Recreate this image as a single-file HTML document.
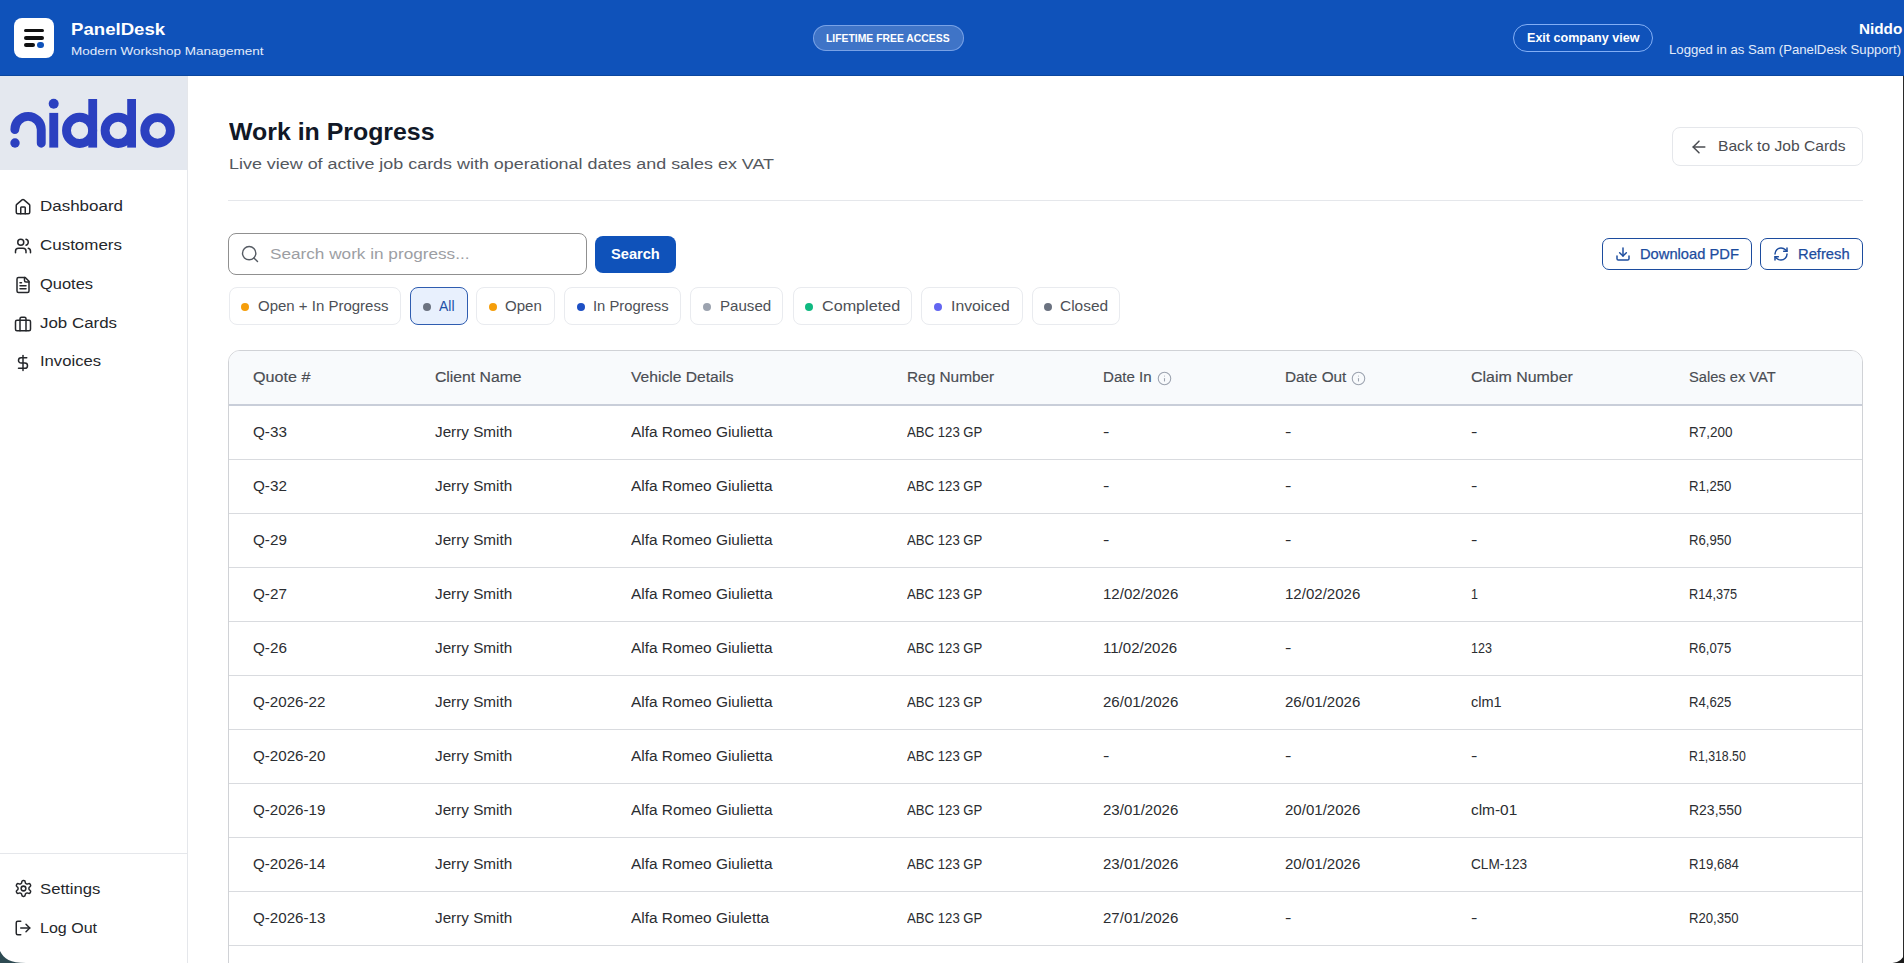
<!DOCTYPE html>
<html><head><meta charset="utf-8">
<style>
*{box-sizing:border-box;margin:0;padding:0}
html,body{width:1904px;height:963px;overflow:hidden;background:#fff;font-family:"Liberation Sans",sans-serif;color:#1f2937}
.t{position:absolute;white-space:nowrap;line-height:1;transform-origin:0 0}
.b{position:absolute}
.ic{position:absolute;overflow:visible}
</style></head>
<body>
<div class="b" style="left:0;top:0;width:1904px;height:76px;background:#0F52BA"></div>
<div class="b" style="left:0;top:75px;width:1904px;height:1px;background:#0B479F"></div>
<div class="b" style="left:14px;top:18px;width:40px;height:40px;background:#fff;border-radius:8px"></div>
<div class="b" style="left:24.2px;top:28.7px;width:19.7px;height:3.7px;background:#111;border-radius:2px"></div>
<div class="b" style="left:24.2px;top:36.2px;width:19.7px;height:3.7px;background:#111;border-radius:2px"></div>
<div class="b" style="left:24.2px;top:43.4px;width:10.5px;height:3.7px;background:#111;border-radius:2px"></div>
<div class="b" style="left:37.2px;top:41.9px;width:6.6px;height:6.6px;background:#0F52BA;border-radius:50%"></div>
<div class="t" style="left:70.70px;top:21px;font-size:17px;transform:scaleX(1.0947);font-weight:bold;color:#fff;">PanelDesk</div>
<div class="t" style="left:70.50px;top:46px;font-size:11.5px;transform:scaleX(1.1734);color:#E3ECFA;">Modern Workshop Management</div>
<div class="b" style="left:813px;top:25px;width:151px;height:26px;border-radius:13px;background:rgba(255,255,255,0.2);border:1px solid rgba(170,200,255,0.55)"></div>
<div class="t" style="left:826.40px;top:33px;font-size:11.5px;transform:scaleX(0.9025);font-weight:bold;color:#fff;">LIFETIME FREE ACCESS</div>
<div class="b" style="left:1513px;top:24px;width:140px;height:28px;border-radius:14px;border:1px solid rgba(150,190,255,0.85)"></div>
<div class="t" style="left:1527.00px;top:32px;font-size:12px;transform:scaleX(1.0470);font-weight:bold;color:#fff;">Exit company view</div>
<div class="t" style="left:1858.50px;top:21px;font-size:15.5px;transform:scaleX(0.9852);font-weight:bold;color:#fff;">Niddo</div>
<div class="t" style="left:1669.25px;top:43px;font-size:13px;transform:scaleX(1.0129);color:#E3ECFA;">Logged in as Sam (PanelDesk Support)</div>
<div class="b" style="left:187px;top:76px;width:1px;height:887px;background:#E5E7EB"></div>
<div class="b" style="left:0;top:76px;width:187px;height:94px;background:#E4E8EF"></div>
<svg class="ic" style="left:0;top:76px;width:187px;height:94px" viewBox="0 76 187 94">
<g fill="#2B40C0">
<circle cx="15" cy="143" r="4.7"/>
<circle cx="53.7" cy="103.8" r="5"/>
<rect x="49.3" y="112.9" width="8.9" height="34.7"/>
<rect x="88.3" y="99" width="8.8" height="48.6"/>
<rect x="127.2" y="99" width="8.8" height="48.6"/>
</g>
<g fill="none" stroke="#2B40C0" stroke-width="8.9">
<path d="M14.85 129.6 A13.2 13.2 0 0 1 41.25 129.6 V143.2" stroke-linecap="round"/>
<circle cx="79.6" cy="130.4" r="13.1"/>
<circle cx="118.2" cy="130.4" r="13.1"/>
<circle cx="157.6" cy="130.4" r="12.8"/>
</g>
</svg>
<svg class="ic" style="left:14px;top:198.0px;width:18px;height:18px" viewBox="0 0 24 24" fill="none" stroke="#25272B" stroke-width="2" stroke-linecap="round" stroke-linejoin="round"><path d="M15 21v-8a1 1 0 0 0-1-1h-4a1 1 0 0 0-1 1v8"/><path d="M3 10a2 2 0 0 1 .709-1.528l7-5.999a2 2 0 0 1 2.582 0l7 5.999A2 2 0 0 1 21 10v9a2 2 0 0 1-2 2H5a2 2 0 0 1-2-2z"/></svg>
<div class="t" style="left:40.30px;top:198px;font-size:15.5px;transform:scaleX(1.0943);color:#25272B;">Dashboard</div>
<svg class="ic" style="left:14px;top:236.8px;width:18px;height:18px" viewBox="0 0 24 24" fill="none" stroke="#25272B" stroke-width="2" stroke-linecap="round" stroke-linejoin="round"><path d="M16 21v-2a4 4 0 0 0-4-4H6a4 4 0 0 0-4 4v2"/><circle cx="9" cy="7" r="4"/><path d="M22 21v-2a4 4 0 0 0-3-3.87"/><path d="M16 3.13a4 4 0 0 1 0 7.75"/></svg>
<div class="t" style="left:40.30px;top:237px;font-size:15.5px;transform:scaleX(1.0941);color:#25272B;">Customers</div>
<svg class="ic" style="left:14px;top:275.7px;width:18px;height:18px" viewBox="0 0 24 24" fill="none" stroke="#25272B" stroke-width="2" stroke-linecap="round" stroke-linejoin="round"><path d="M15 2H6a2 2 0 0 0-2 2v16a2 2 0 0 0 2 2h12a2 2 0 0 0 2-2V7Z"/><path d="M14 2v4a2 2 0 0 0 2 2h4"/><path d="M10 9H8"/><path d="M16 13H8"/><path d="M16 17H8"/></svg>
<div class="t" style="left:40.30px;top:276px;font-size:15.5px;transform:scaleX(1.0611);color:#25272B;">Quotes</div>
<svg class="ic" style="left:14px;top:314.6px;width:18px;height:18px" viewBox="0 0 24 24" fill="none" stroke="#25272B" stroke-width="2" stroke-linecap="round" stroke-linejoin="round"><rect width="20" height="14" x="2" y="7" rx="2" ry="2"/><path d="M16 21V5a2 2 0 0 0-2-2h-4a2 2 0 0 0-2 2v16"/></svg>
<div class="t" style="left:40.30px;top:315px;font-size:15.5px;transform:scaleX(1.0899);color:#25272B;">Job Cards</div>
<svg class="ic" style="left:14px;top:353.5px;width:18px;height:18px" viewBox="0 0 24 24" fill="none" stroke="#25272B" stroke-width="2" stroke-linecap="round" stroke-linejoin="round"><line x1="12" x2="12" y1="2" y2="22"/><path d="M17 5H9.5a3.5 3.5 0 0 0 0 7h5a3.5 3.5 0 0 1 0 7H6"/></svg>
<div class="t" style="left:40.30px;top:353px;font-size:15.5px;transform:scaleX(1.0730);color:#25272B;">Invoices</div>
<div class="b" style="left:0;top:853px;width:187px;height:1px;background:#E5E7EB"></div>
<svg class="ic" style="left:13.5px;top:879.4px;width:19px;height:19px" viewBox="0 0 24 24" fill="none" stroke="#25272B" stroke-width="1.9" stroke-linecap="round" stroke-linejoin="round"><path d="M12.22 2h-.44a2 2 0 0 0-2 2v.18a2 2 0 0 1-1 1.73l-.43.25a2 2 0 0 1-2 0l-.15-.08a2 2 0 0 0-2.730.73l-.22.38a2 2 0 0 0 .73 2.73l.15.1a2 2 0 0 1 1 1.72v.51a2 2 0 0 1-1 1.74l-.15.09a2 2 0 0 0-.73 2.73l.22.38a2 2 0 0 0 2.73.73l.15-.08a2 2 0 0 1 2 0l.43.25a2 2 0 0 1 1 1.73V20a2 2 0 0 0 2 2h.44a2 2 0 0 0 2-2v-.18a2 2 0 0 1 1-1.730l.43-.25a2 2 0 0 1 2 0l.15.08a2 2 0 0 0 2.73-.73l.22-.39a2 2 0 0 0-.73-2.73l-.15-.08a2 2 0 0 1-1-1.74v-.5a2 2 0 0 1 1-1.74l.15-.09a2 2 0 0 0 .73-2.73l-.22-.38a2 2 0 0 0-2.73-.73l-.15.08a2 2 0 0 1-2 0l-.43-.25a2 2 0 0 1-1-1.73V4a2 2 0 0 0-2-2z"/><circle cx="12" cy="12" r="3"/></svg>
<div class="t" style="left:40.30px;top:881px;font-size:15.5px;transform:scaleX(1.0768);color:#25272B;">Settings</div>
<svg class="ic" style="left:14px;top:918.8000000000001px;width:18px;height:18px" viewBox="0 0 24 24" fill="none" stroke="#25272B" stroke-width="2" stroke-linecap="round" stroke-linejoin="round"><path d="M9 21H5a2 2 0 0 1-2-2V5a2 2 0 0 1 2-2h4"/><polyline points="16 17 21 12 16 7"/><line x1="21" x2="9" y1="12" y2="12"/></svg>
<div class="t" style="left:40.30px;top:920px;font-size:15.5px;transform:scaleX(1.0335);color:#25272B;">Log Out</div>
<svg class="ic" style="left:0;top:930px;width:40px;height:33px" viewBox="0 0 40 33"><path d="M0 21 C4 29 10 33 26 33 L0 33 Z" fill="#2E4A52"/></svg>
<div class="t" style="left:228.80px;top:120px;font-size:24.5px;transform:scaleX(1.0153);font-weight:bold;color:#111827;">Work in Progress</div>
<div class="t" style="left:228.50px;top:156px;font-size:15.5px;transform:scaleX(1.1558);color:#54585E;">Live view of active job cards with operational dates and sales ex VAT</div>
<div class="b" style="left:1672px;top:127px;width:191px;height:39px;border:1px solid #E5E7EB;border-radius:8px;background:#fff"></div>
<svg class="ic" style="left:1689px;top:136.5px;width:20px;height:20px" viewBox="0 0 24 24" fill="none" stroke="#4A4C51" stroke-width="1.8" stroke-linecap="round" stroke-linejoin="round"><path d="m12 19-7-7 7-7"/><path d="M19 12H5"/></svg>
<div class="t" style="left:1717.80px;top:138px;font-size:15px;transform:scaleX(1.0412);color:#4A4C51;">Back to Job Cards</div>
<div class="b" style="left:228px;top:200px;width:1635px;height:1px;background:#E5E7EB"></div>
<div class="b" style="left:228px;top:233px;width:359px;height:42px;border:1px solid #909090;border-radius:8px;background:#fff"></div>
<svg class="ic" style="left:240px;top:244px;width:20px;height:20px" viewBox="0 0 24 24" fill="none" stroke="#555B63" stroke-width="1.7" stroke-linecap="round" stroke-linejoin="round"><circle cx="11" cy="11" r="8"/><path d="m21 21-4.3-4.3"/></svg>
<div class="t" style="left:270.00px;top:246px;font-size:15.5px;transform:scaleX(1.1080);color:#9C9EA3;">Search work in progress...</div>
<div class="b" style="left:595px;top:236px;width:81px;height:37px;border-radius:8px;background:#0F52BA"></div>
<div class="t" style="left:610.70px;top:247px;font-size:14.5px;transform:scaleX(1.0093);font-weight:bold;color:#fff;">Search</div>
<div class="b" style="left:1602px;top:238px;width:150px;height:32px;border:1px solid #1C4C9E;border-radius:7px;background:#fff"></div>
<svg class="ic" style="left:1615px;top:246px;width:16px;height:16px" viewBox="0 0 24 24" fill="none" stroke="#1C4C9E" stroke-width="2.2" stroke-linecap="round" stroke-linejoin="round"><path d="M21 15v4a2 2 0 0 1-2 2H5a2 2 0 0 1-2-2v-4"/><polyline points="7 10 12 15 17 10"/><line x1="12" x2="12" y1="15" y2="3"/></svg>
<div class="t" style="left:1639.80px;top:247px;font-size:14.5px;transform:scaleX(1.0144);color:#1C4C9E;-webkit-text-stroke:0.25px #1C4C9E;">Download PDF</div>
<div class="b" style="left:1760px;top:238px;width:103px;height:32px;border:1px solid #1C4C9E;border-radius:7px;background:#fff"></div>
<svg class="ic" style="left:1773px;top:246px;width:16px;height:16px" viewBox="0 0 24 24" fill="none" stroke="#1C4C9E" stroke-width="2.2" stroke-linecap="round" stroke-linejoin="round"><path d="M3 12a9 9 0 0 1 9-9 9.75 9.75 0 0 1 6.740 2.740L21 8"/><path d="M21 3v5h-5"/><path d="M21 12a9 9 0 0 1-9 9 9.75 9.75 0 0 1-6.740-2.740L3 16"/><path d="M8 16H3v5"/></svg>
<div class="t" style="left:1797.90px;top:247px;font-size:14.5px;transform:scaleX(1.0167);color:#1C4C9E;-webkit-text-stroke:0.25px #1C4C9E;">Refresh</div>
<div class="b" style="left:229px;top:287px;width:172px;height:38px;border:1px solid #E9EBEF;border-radius:8px;background:#fff"></div>
<div class="b" style="left:240.8px;top:302.8px;width:8.2px;height:8.2px;border-radius:50%;background:#F59E0B"></div>
<div class="t" style="left:257.60px;top:299px;font-size:14.5px;transform:scaleX(1.0337);color:#4D5056;">Open + In Progress</div>
<div class="b" style="left:410px;top:287px;width:58px;height:38px;border:1px solid #2F5DB0;border-radius:8px;background:#E8F0FD"></div>
<div class="b" style="left:422.6px;top:302.8px;width:8.2px;height:8.2px;border-radius:50%;background:#6B7280"></div>
<div class="t" style="left:439.00px;top:299px;font-size:14.5px;transform:scaleX(0.9627);color:#1E4FA6;">All</div>
<div class="b" style="left:476px;top:287px;width:79px;height:38px;border:1px solid #E9EBEF;border-radius:8px;background:#fff"></div>
<div class="b" style="left:488.9px;top:302.8px;width:8.2px;height:8.2px;border-radius:50%;background:#F59E0B"></div>
<div class="t" style="left:505.40px;top:299px;font-size:14.5px;transform:scaleX(1.0381);color:#4D5056;">Open</div>
<div class="b" style="left:564px;top:287px;width:117px;height:38px;border:1px solid #E9EBEF;border-radius:8px;background:#fff"></div>
<div class="b" style="left:576.8px;top:302.8px;width:8.2px;height:8.2px;border-radius:50%;background:#1D4FC4"></div>
<div class="t" style="left:593.10px;top:299px;font-size:14.5px;transform:scaleX(1.0196);color:#4D5056;">In Progress</div>
<div class="b" style="left:690px;top:287px;width:93px;height:38px;border:1px solid #E9EBEF;border-radius:8px;background:#fff"></div>
<div class="b" style="left:703.0px;top:302.8px;width:8.2px;height:8.2px;border-radius:50%;background:#9CA3AF"></div>
<div class="t" style="left:719.90px;top:299px;font-size:14.5px;transform:scaleX(1.0407);color:#4D5056;">Paused</div>
<div class="b" style="left:793px;top:287px;width:119px;height:38px;border:1px solid #E9EBEF;border-radius:8px;background:#fff"></div>
<div class="b" style="left:804.9px;top:302.8px;width:8.2px;height:8.2px;border-radius:50%;background:#10B981"></div>
<div class="t" style="left:821.80px;top:299px;font-size:14.5px;transform:scaleX(1.1141);color:#4D5056;">Completed</div>
<div class="b" style="left:921px;top:287px;width:102px;height:38px;border:1px solid #E9EBEF;border-radius:8px;background:#fff"></div>
<div class="b" style="left:934.2px;top:302.8px;width:8.2px;height:8.2px;border-radius:50%;background:#6366F1"></div>
<div class="t" style="left:950.60px;top:299px;font-size:14.5px;transform:scaleX(1.0870);color:#4D5056;">Invoiced</div>
<div class="b" style="left:1032px;top:287px;width:88px;height:38px;border:1px solid #E9EBEF;border-radius:8px;background:#fff"></div>
<div class="b" style="left:1044.0px;top:302.8px;width:8.2px;height:8.2px;border-radius:50%;background:#6B7280"></div>
<div class="t" style="left:1060.00px;top:299px;font-size:14.5px;transform:scaleX(1.0653);color:#4D5056;">Closed</div>
<div class="b" style="left:228px;top:350px;width:1635px;height:700px;border:1px solid #D0D2D6;border-radius:12px;background:#fff;overflow:hidden"><div class="b" style="left:0;top:0;width:100%;height:53px;background:#F8FAFC"></div><div class="b" style="left:0;top:53px;width:100%;height:2px;background:#C9CED9"></div></div>
<div class="t" style="left:253.40px;top:370px;font-size:14.75px;transform:scaleX(1.0952);color:#4A4D53;-webkit-text-stroke:0.15px #4A4D53;">Quote #</div>
<div class="t" style="left:434.60px;top:370px;font-size:14.75px;transform:scaleX(1.0672);color:#4A4D53;-webkit-text-stroke:0.15px #4A4D53;">Client Name</div>
<div class="t" style="left:630.80px;top:370px;font-size:14.75px;transform:scaleX(1.0594);color:#4A4D53;-webkit-text-stroke:0.15px #4A4D53;">Vehicle Details</div>
<div class="t" style="left:906.50px;top:370px;font-size:14.75px;transform:scaleX(1.0431);color:#4A4D53;-webkit-text-stroke:0.15px #4A4D53;">Reg Number</div>
<div class="t" style="left:1103.20px;top:370px;font-size:14.75px;transform:scaleX(1.0221);color:#4A4D53;-webkit-text-stroke:0.15px #4A4D53;">Date In</div>
<svg class="ic" style="left:1156.8px;top:370.5px;width:15px;height:15px" viewBox="0 0 24 24" fill="none" stroke="#9CA3AF" stroke-width="1.7" stroke-linecap="round" stroke-linejoin="round"><circle cx="12" cy="12" r="10"/><path d="M12 16v-4"/><path d="M12 8h.01"/></svg>
<div class="t" style="left:1284.70px;top:370px;font-size:14.75px;transform:scaleX(1.0398);color:#4A4D53;-webkit-text-stroke:0.15px #4A4D53;">Date Out</div>
<svg class="ic" style="left:1351.1000000000001px;top:370.5px;width:15px;height:15px" viewBox="0 0 24 24" fill="none" stroke="#9CA3AF" stroke-width="1.7" stroke-linecap="round" stroke-linejoin="round"><circle cx="12" cy="12" r="10"/><path d="M12 16v-4"/><path d="M12 8h.01"/></svg>
<div class="t" style="left:1470.50px;top:370px;font-size:14.75px;transform:scaleX(1.0812);color:#4A4D53;-webkit-text-stroke:0.15px #4A4D53;">Claim Number</div>
<div class="t" style="left:1689.40px;top:370px;font-size:14.75px;transform:scaleX(0.9937);color:#4A4D53;-webkit-text-stroke:0.15px #4A4D53;">Sales ex VAT</div>
<div class="t" style="left:253.40px;top:425px;font-size:14.75px;transform:scaleX(1.0335);color:#2B2D31;">Q-33</div>
<div class="t" style="left:434.60px;top:425px;font-size:14.75px;transform:scaleX(1.0349);color:#2B2D31;">Jerry Smith</div>
<div class="t" style="left:630.80px;top:425px;font-size:14.75px;transform:scaleX(1.0458);color:#2B2D31;">Alfa Romeo Giulietta</div>
<div class="t" style="left:906.50px;top:425px;font-size:14.75px;transform:scaleX(0.8928);color:#2B2D31;">ABC 123 GP</div>
<div class="t" style="left:1103.20px;top:425px;font-size:14.75px;transform:scaleX(1.3000);color:#2B2D31;">-</div>
<div class="t" style="left:1284.70px;top:425px;font-size:14.75px;transform:scaleX(1.3000);color:#2B2D31;">-</div>
<div class="t" style="left:1470.50px;top:425px;font-size:14.75px;transform:scaleX(1.3000);color:#2B2D31;">-</div>
<div class="t" style="left:1689.40px;top:425px;font-size:14.75px;transform:scaleX(0.9127);color:#2B2D31;">R7,200</div>
<div class="b" style="left:229px;top:459px;width:1633px;height:1px;background:#D9DBDF"></div>
<div class="t" style="left:253.40px;top:479px;font-size:14.75px;transform:scaleX(1.0335);color:#2B2D31;">Q-32</div>
<div class="t" style="left:434.60px;top:479px;font-size:14.75px;transform:scaleX(1.0349);color:#2B2D31;">Jerry Smith</div>
<div class="t" style="left:630.80px;top:479px;font-size:14.75px;transform:scaleX(1.0458);color:#2B2D31;">Alfa Romeo Giulietta</div>
<div class="t" style="left:906.50px;top:479px;font-size:14.75px;transform:scaleX(0.8928);color:#2B2D31;">ABC 123 GP</div>
<div class="t" style="left:1103.20px;top:479px;font-size:14.75px;transform:scaleX(1.3000);color:#2B2D31;">-</div>
<div class="t" style="left:1284.70px;top:479px;font-size:14.75px;transform:scaleX(1.3000);color:#2B2D31;">-</div>
<div class="t" style="left:1470.50px;top:479px;font-size:14.75px;transform:scaleX(1.3000);color:#2B2D31;">-</div>
<div class="t" style="left:1689.40px;top:479px;font-size:14.75px;transform:scaleX(0.8908);color:#2B2D31;">R1,250</div>
<div class="b" style="left:229px;top:513px;width:1633px;height:1px;background:#D9DBDF"></div>
<div class="t" style="left:253.40px;top:533px;font-size:14.75px;transform:scaleX(1.0335);color:#2B2D31;">Q-29</div>
<div class="t" style="left:434.60px;top:533px;font-size:14.75px;transform:scaleX(1.0349);color:#2B2D31;">Jerry Smith</div>
<div class="t" style="left:630.80px;top:533px;font-size:14.75px;transform:scaleX(1.0458);color:#2B2D31;">Alfa Romeo Giulietta</div>
<div class="t" style="left:906.50px;top:533px;font-size:14.75px;transform:scaleX(0.8928);color:#2B2D31;">ABC 123 GP</div>
<div class="t" style="left:1103.20px;top:533px;font-size:14.75px;transform:scaleX(1.3000);color:#2B2D31;">-</div>
<div class="t" style="left:1284.70px;top:533px;font-size:14.75px;transform:scaleX(1.3000);color:#2B2D31;">-</div>
<div class="t" style="left:1470.50px;top:533px;font-size:14.75px;transform:scaleX(1.3000);color:#2B2D31;">-</div>
<div class="t" style="left:1689.40px;top:533px;font-size:14.75px;transform:scaleX(0.8908);color:#2B2D31;">R6,950</div>
<div class="b" style="left:229px;top:567px;width:1633px;height:1px;background:#D9DBDF"></div>
<div class="t" style="left:253.40px;top:587px;font-size:14.75px;transform:scaleX(1.0335);color:#2B2D31;">Q-27</div>
<div class="t" style="left:434.60px;top:587px;font-size:14.75px;transform:scaleX(1.0349);color:#2B2D31;">Jerry Smith</div>
<div class="t" style="left:630.80px;top:587px;font-size:14.75px;transform:scaleX(1.0458);color:#2B2D31;">Alfa Romeo Giulietta</div>
<div class="t" style="left:906.50px;top:587px;font-size:14.75px;transform:scaleX(0.8928);color:#2B2D31;">ABC 123 GP</div>
<div class="t" style="left:1103.20px;top:587px;font-size:14.75px;transform:scaleX(1.0203);color:#2B2D31;">12/02/2026</div>
<div class="t" style="left:1284.70px;top:587px;font-size:14.75px;transform:scaleX(1.0203);color:#2B2D31;">12/02/2026</div>
<div class="t" style="left:1470.50px;top:587px;font-size:14.75px;transform:scaleX(0.8500);color:#2B2D31;">1</div>
<div class="t" style="left:1689.40px;top:587px;font-size:14.75px;transform:scaleX(0.8646);color:#2B2D31;">R14,375</div>
<div class="b" style="left:229px;top:621px;width:1633px;height:1px;background:#D9DBDF"></div>
<div class="t" style="left:253.40px;top:641px;font-size:14.75px;transform:scaleX(1.0335);color:#2B2D31;">Q-26</div>
<div class="t" style="left:434.60px;top:641px;font-size:14.75px;transform:scaleX(1.0349);color:#2B2D31;">Jerry Smith</div>
<div class="t" style="left:630.80px;top:641px;font-size:14.75px;transform:scaleX(1.0458);color:#2B2D31;">Alfa Romeo Giulietta</div>
<div class="t" style="left:906.50px;top:641px;font-size:14.75px;transform:scaleX(0.8928);color:#2B2D31;">ABC 123 GP</div>
<div class="t" style="left:1103.20px;top:641px;font-size:14.75px;transform:scaleX(1.0203);color:#2B2D31;">11/02/2026</div>
<div class="t" style="left:1284.70px;top:641px;font-size:14.75px;transform:scaleX(1.3000);color:#2B2D31;">-</div>
<div class="t" style="left:1470.50px;top:641px;font-size:14.75px;transform:scaleX(0.8500);color:#2B2D31;">123</div>
<div class="t" style="left:1689.40px;top:641px;font-size:14.75px;transform:scaleX(0.8908);color:#2B2D31;">R6,075</div>
<div class="b" style="left:229px;top:675px;width:1633px;height:1px;background:#D9DBDF"></div>
<div class="t" style="left:253.40px;top:695px;font-size:14.75px;transform:scaleX(1.0270);color:#2B2D31;">Q-2026-22</div>
<div class="t" style="left:434.60px;top:695px;font-size:14.75px;transform:scaleX(1.0349);color:#2B2D31;">Jerry Smith</div>
<div class="t" style="left:630.80px;top:695px;font-size:14.75px;transform:scaleX(1.0458);color:#2B2D31;">Alfa Romeo Giulietta</div>
<div class="t" style="left:906.50px;top:695px;font-size:14.75px;transform:scaleX(0.8928);color:#2B2D31;">ABC 123 GP</div>
<div class="t" style="left:1103.20px;top:695px;font-size:14.75px;transform:scaleX(1.0203);color:#2B2D31;">26/01/2026</div>
<div class="t" style="left:1284.70px;top:695px;font-size:14.75px;transform:scaleX(1.0203);color:#2B2D31;">26/01/2026</div>
<div class="t" style="left:1470.50px;top:695px;font-size:14.75px;transform:scaleX(0.9845);color:#2B2D31;">clm1</div>
<div class="t" style="left:1689.40px;top:695px;font-size:14.75px;transform:scaleX(0.8908);color:#2B2D31;">R4,625</div>
<div class="b" style="left:229px;top:729px;width:1633px;height:1px;background:#D9DBDF"></div>
<div class="t" style="left:253.40px;top:749px;font-size:14.75px;transform:scaleX(1.0270);color:#2B2D31;">Q-2026-20</div>
<div class="t" style="left:434.60px;top:749px;font-size:14.75px;transform:scaleX(1.0349);color:#2B2D31;">Jerry Smith</div>
<div class="t" style="left:630.80px;top:749px;font-size:14.75px;transform:scaleX(1.0458);color:#2B2D31;">Alfa Romeo Giulietta</div>
<div class="t" style="left:906.50px;top:749px;font-size:14.75px;transform:scaleX(0.8928);color:#2B2D31;">ABC 123 GP</div>
<div class="t" style="left:1103.20px;top:749px;font-size:14.75px;transform:scaleX(1.3000);color:#2B2D31;">-</div>
<div class="t" style="left:1284.70px;top:749px;font-size:14.75px;transform:scaleX(1.3000);color:#2B2D31;">-</div>
<div class="t" style="left:1470.50px;top:749px;font-size:14.75px;transform:scaleX(1.3000);color:#2B2D31;">-</div>
<div class="t" style="left:1689.40px;top:749px;font-size:14.75px;transform:scaleX(0.8347);color:#2B2D31;">R1,318.50</div>
<div class="b" style="left:229px;top:783px;width:1633px;height:1px;background:#D9DBDF"></div>
<div class="t" style="left:253.40px;top:803px;font-size:14.75px;transform:scaleX(1.0270);color:#2B2D31;">Q-2026-19</div>
<div class="t" style="left:434.60px;top:803px;font-size:14.75px;transform:scaleX(1.0349);color:#2B2D31;">Jerry Smith</div>
<div class="t" style="left:630.80px;top:803px;font-size:14.75px;transform:scaleX(1.0458);color:#2B2D31;">Alfa Romeo Giulietta</div>
<div class="t" style="left:906.50px;top:803px;font-size:14.75px;transform:scaleX(0.8928);color:#2B2D31;">ABC 123 GP</div>
<div class="t" style="left:1103.20px;top:803px;font-size:14.75px;transform:scaleX(1.0203);color:#2B2D31;">23/01/2026</div>
<div class="t" style="left:1284.70px;top:803px;font-size:14.75px;transform:scaleX(1.0203);color:#2B2D31;">20/01/2026</div>
<div class="t" style="left:1470.50px;top:803px;font-size:14.75px;transform:scaleX(1.0441);color:#2B2D31;">clm-01</div>
<div class="t" style="left:1689.40px;top:803px;font-size:14.75px;transform:scaleX(0.9471);color:#2B2D31;">R23,550</div>
<div class="b" style="left:229px;top:837px;width:1633px;height:1px;background:#D9DBDF"></div>
<div class="t" style="left:253.40px;top:857px;font-size:14.75px;transform:scaleX(1.0270);color:#2B2D31;">Q-2026-14</div>
<div class="t" style="left:434.60px;top:857px;font-size:14.75px;transform:scaleX(1.0349);color:#2B2D31;">Jerry Smith</div>
<div class="t" style="left:630.80px;top:857px;font-size:14.75px;transform:scaleX(1.0458);color:#2B2D31;">Alfa Romeo Giulietta</div>
<div class="t" style="left:906.50px;top:857px;font-size:14.75px;transform:scaleX(0.8928);color:#2B2D31;">ABC 123 GP</div>
<div class="t" style="left:1103.20px;top:857px;font-size:14.75px;transform:scaleX(1.0203);color:#2B2D31;">23/01/2026</div>
<div class="t" style="left:1284.70px;top:857px;font-size:14.75px;transform:scaleX(1.0203);color:#2B2D31;">20/01/2026</div>
<div class="t" style="left:1470.50px;top:857px;font-size:14.75px;transform:scaleX(0.9250);color:#2B2D31;">CLM-123</div>
<div class="t" style="left:1689.40px;top:857px;font-size:14.75px;transform:scaleX(0.8951);color:#2B2D31;">R19,684</div>
<div class="b" style="left:229px;top:891px;width:1633px;height:1px;background:#D9DBDF"></div>
<div class="t" style="left:253.40px;top:911px;font-size:14.75px;transform:scaleX(1.0270);color:#2B2D31;">Q-2026-13</div>
<div class="t" style="left:434.60px;top:911px;font-size:14.75px;transform:scaleX(1.0349);color:#2B2D31;">Jerry Smith</div>
<div class="t" style="left:630.80px;top:911px;font-size:14.75px;transform:scaleX(1.0458);color:#2B2D31;">Alfa Romeo Giuletta</div>
<div class="t" style="left:906.50px;top:911px;font-size:14.75px;transform:scaleX(0.8928);color:#2B2D31;">ABC 123 GP</div>
<div class="t" style="left:1103.20px;top:911px;font-size:14.75px;transform:scaleX(1.0203);color:#2B2D31;">27/01/2026</div>
<div class="t" style="left:1284.70px;top:911px;font-size:14.75px;transform:scaleX(1.3000);color:#2B2D31;">-</div>
<div class="t" style="left:1470.50px;top:911px;font-size:14.75px;transform:scaleX(1.3000);color:#2B2D31;">-</div>
<div class="t" style="left:1689.40px;top:911px;font-size:14.75px;transform:scaleX(0.8908);color:#2B2D31;">R20,350</div>
<div class="b" style="left:229px;top:945px;width:1633px;height:1px;background:#D9DBDF"></div>
<div class="b" style="left:1903px;top:76px;width:1px;height:887px;background:#2a2a2a"></div>
<svg class="ic" style="left:1888px;top:955px;width:16px;height:8px" viewBox="0 0 16 8"><path d="M16 0 V8 H2 C9 8 14 5.5 16 0 Z" fill="#1a1a1a"/></svg>
</body></html>
